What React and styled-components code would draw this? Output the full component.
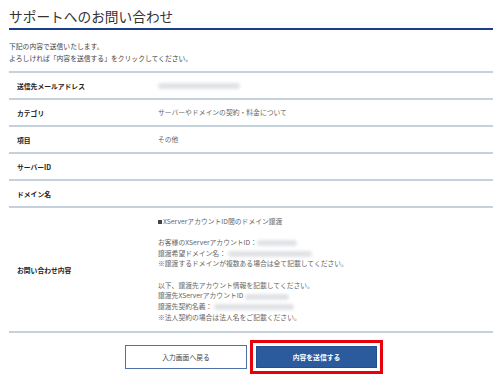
import React from "react";
import styled, { createGlobalStyle } from "styled-components";

const GlobalStyle = createGlobalStyle`
  html, body {
    margin: 0;
    padding: 0;
    background: #fff;
  }
  body {
    font-family: "Noto Sans CJK JP", "Noto Sans", sans-serif;
    color: #333;
  }
`;

const Page = styled.div`
  width: 484px;
  margin-left: 9px;
  height: 390px;
  overflow: hidden;
`;

const Title = styled.h1`
  margin: 0;
  padding: 6px 0 2px;
  font-size: 13.7px;
  font-weight: 400;
  line-height: 20px;
  color: #333;
  border-bottom: 2px solid #1c3c8c;
`;

const Intro = styled.p`
  margin: 10px 0 7px;
  font-size: 6.8px;
  line-height: 12px;
  color: #444;
`;

const Table = styled.div`
  border-top: 2px solid #c6d1de;
`;

const Row = styled.div`
  display: grid;
  grid-template-columns: 149px 1fr;
  align-items: center;
  min-height: ${(p) => (p.$tall ? "123px" : "25px")};
  border-bottom: 2px solid #c6d1de;
`;

const Label = styled.div`
  padding-left: 8px;
  font-size: 6.8px;
  font-weight: 700;
  color: #222;
`;

const Value = styled.div`
  font-size: 6.8px;
  color: #666;
  line-height: 10.7px;
  padding: ${(p) => (p.$block ? "7px 0 8px" : "0")};
`;

const Line = styled.div`
  height: 10.7px;
  white-space: nowrap;
`;

const Square = styled.span`
  display: inline-block;
  width: 4px;
  height: 4px;
  margin-right: 1px;
  background: #444;
  vertical-align: 0;
`;

const Masked = styled.span`
  display: inline-block;
  vertical-align: middle;
  width: ${(p) => p.$w}px;
  height: 6px;
  margin-left: ${(p) => p.$ml || 0}px;
  background: #d9dbe0;
  border-radius: 3px;
  filter: blur(1.6px);
  opacity: 0.8;
`;

const Actions = styled.div`
  display: flex;
  justify-content: center;
  gap: 9px;
  padding-top: 12px;
`;

const Button = styled.button`
  width: ${(p) => (p.$primary ? "121px" : "122px")};
  height: ${(p) => (p.$primary ? "22px" : "24px")};
  margin-top: ${(p) => (p.$primary ? "1px" : "0")};
  font-family: inherit;
  font-size: 6.8px;
  font-weight: ${(p) => (p.$primary ? 700 : 400)};
  color: ${(p) => (p.$primary ? "#fff" : "#444")};
  background: ${(p) => (p.$primary ? "#2c5b9d" : "#fff")};
  border: 1px solid ${(p) => (p.$primary ? "#244f8f" : "#4d72aa")};
  border-radius: 0;
  padding: 0;
  cursor: pointer;
  outline: ${(p) => (p.$highlight ? "3px solid #e8000b" : "none")};
  outline-offset: 3px;
`;

const rows = [
  { label: "送信先メールアドレス", value: <Masked $w={82} /> },
  { label: "カテゴリ", value: "サーバーやドメインの契約・料金について" },
  { label: "項目", value: "その他" },
  { label: "サーバーID", value: "" },
  { label: "ドメイン名", value: "" },
];

export default function App() {
  return (
    <>
      <GlobalStyle />
      <Page>
        <Title>サポートへのお問い合わせ</Title>
        <Intro>
          下記の内容で送信いたします。
          <br />
          よろしければ「内容を送信する」をクリックしてください。
        </Intro>
        <Table>
          {rows.map((r) => (
            <Row key={r.label}>
              <Label>{r.label}</Label>
              <Value>{r.value}</Value>
            </Row>
          ))}
          <Row $tall>
            <Label>お問い合わせ内容</Label>
            <Value $block>
              <Line>
                <Square />
                XServerアカウントID間のドメイン譲渡
              </Line>
              <Line />
              <Line>
                お客様のXServerアカウントID：<Masked $w={40} />
              </Line>
              <Line>
                譲渡希望ドメイン名：<Masked $w={84} $ml={2} />
              </Line>
              <Line>※譲渡するドメインが複数ある場合は全て記載してください。</Line>
              <Line />
              <Line>以下、譲渡先アカウント情報を記載してください。</Line>
              <Line>
                譲渡先XServerアカウントID<Masked $w={44} $ml={2} />
              </Line>
              <Line>
                譲渡先契約名義：<Masked $w={80} $ml={2} />
              </Line>
              <Line>※法人契約の場合は法人名をご記載ください。</Line>
            </Value>
          </Row>
        </Table>
        <Actions>
          <Button>入力画面へ戻る</Button>
          <Button $primary $highlight>
            内容を送信する
          </Button>
        </Actions>
      </Page>
    </>
  );
}
